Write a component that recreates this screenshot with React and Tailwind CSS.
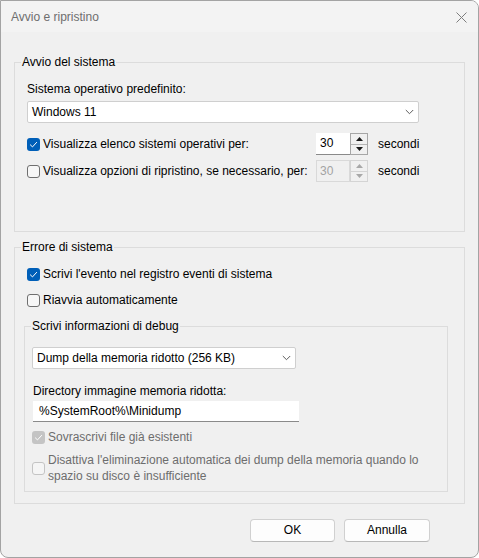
import React from 'react';

function CheckBox({ checked, disabled }) {
  let box = 'border border-[#6f6f6f] bg-[#f7f7f7]';
  if (checked && !disabled) box = 'bg-[#005fb8]';
  if (checked && disabled) box = 'bg-[#c4c4c4]';
  if (!checked && disabled) box = 'border border-[#c4c4c4] bg-[#f5f5f5]';
  return (
    <span className={`w-[13px] h-[13px] shrink-0 rounded-[3px] flex items-center justify-center ${box}`}>
      {checked && (
        <svg width="13" height="13" viewBox="0 0 13 13" fill="none">
          <path d="M3.4 6.9 L5.5 8.9 L9.6 4.4" stroke="#ffffff" strokeWidth="1" strokeLinecap="round" strokeLinejoin="round" />
        </svg>
      )}
    </span>
  );
}

function Chevron() {
  return (
    <svg width="9" height="6" viewBox="0 0 9 6" fill="none">
      <path d="M0.8 1 L4.5 4.7 L8.2 1" stroke="#5c5c5c" strokeWidth="1" />
    </svg>
  );
}

function Arrow({ up, disabled }) {
  const color = disabled ? '#a8a8a8' : '#1a1a1a';
  return (
    <svg width="7" height="4" viewBox="0 0 7 4">
      {up ? <path d="M0 4 L3.5 0 L7 4 Z" fill={color} /> : <path d="M0 0 L3.5 4 L7 0 Z" fill={color} />}
    </svg>
  );
}

function Spinner({ disabled }) {
  return (
    <div className="flex h-[22px]">
      {disabled ? (
        <div className="w-[34px] h-[22px] border border-[#d9d9d9] bg-[#f0f0f0] text-[#a3a3a3] pl-[3px] leading-[20px]">30</div>
      ) : (
        <div className="w-[34px] h-[22px] bg-white border-b border-[#8a8a8a] pl-[4px] leading-[21px] text-black">30</div>
      )}
      <div className={`w-[18px] h-[22px] flex flex-col border ${disabled ? 'border-[#d4d4d4]' : 'border-[#a6a6a6]'}`}>
        <div className={`flex-1 flex items-center justify-center border-b ${disabled ? 'bg-[#f0f0f0] border-[#d4d4d4]' : 'bg-[#f0f0f0] border-[#b4b4b4]'}`}>
          <Arrow up disabled={disabled} />
        </div>
        <div className={`flex-1 flex items-center justify-center ${disabled ? 'bg-[#f0f0f0]' : 'bg-[#f0f0f0]'}`}>
          <Arrow disabled={disabled} />
        </div>
      </div>
    </div>
  );
}

function Select({ value, width }) {
  return (
    <div className={`${width} h-[22px] bg-white border border-[#cfcfcf] rounded-[2px] flex items-center justify-between pl-[4px] pr-[4px]`}>
      <span className="text-black">{value}</span>
      <Chevron />
    </div>
  );
}

function App() {
  return (
    <div className="w-[479px] h-[558px] bg-[#f0f0f0] border border-[#a3a3a3] rounded-tr-[8px] rounded-b-[8px] overflow-hidden font-['Liberation_Sans',Arial,sans-serif] text-[12px] leading-[15px] text-black">
      <div className="h-[31px] bg-[#f3f3f3] flex items-center justify-between pl-[10px] pr-[11px]">
        <span className="text-[#6e6e6e] pt-[2px]">Avvio e ripristino</span>
        <svg width="11" height="11" viewBox="0 0 11 11" className="mt-[1px]">
          <path d="M0.5 0.5 L10.5 10.5 M10.5 0.5 L0.5 10.5" stroke="#7d7d7d" strokeWidth="1" />
        </svg>
      </div>

      <div className="px-[13px] pt-[23px]">
        <fieldset className="border border-[#dcdcdc]">
          <legend className="ml-[6px] px-[1px] leading-[15px]">Avvio del sistema</legend>
          <div className="pl-[12px] pt-[12px] pb-[49px]">
            <div>Sistema operativo predefinito:</div>
            <div className="mt-[4px]">
              <Select value="Windows 11" width="w-[392px]" />
            </div>
            <div className="mt-[10px] flex items-center">
              <div className="w-[289px] flex items-center gap-[3px]">
                <CheckBox checked />
                <span>Visualizza elenco sistemi operativi per:</span>
              </div>
              <Spinner />
              <span className="ml-[10px]">secondi</span>
            </div>
            <div className="mt-[5px] flex items-center">
              <div className="w-[289px] flex items-center gap-[3px]">
                <CheckBox />
                <span>Visualizza opzioni di ripristino, se necessario, per:</span>
              </div>
              <Spinner disabled />
              <span className="ml-[10px]">secondi</span>
            </div>
          </div>
        </fieldset>

        <fieldset className="mt-[8px] border border-[#dcdcdc]">
          <legend className="ml-[6px] px-[1px] leading-[15px]">Errore di sistema</legend>
          <div className="pl-[12px] pt-[12px] pb-[11px]">
            <div className="flex items-center gap-[3px] h-[15px]">
              <CheckBox checked />
              <span>Scrivi l'evento nel registro eventi di sistema</span>
            </div>
            <div className="mt-[11px] flex items-center gap-[3px] h-[15px]">
              <CheckBox />
              <span>Riavvia automaticamente</span>
            </div>

            <fieldset className="mt-[11px] -ml-[3px] w-[424px] border border-[#dcdcdc]">
              <legend className="ml-[6px] px-[1px] leading-[15px]">Scrivi informazioni di debug</legend>
              <div className="pl-[7px] pt-[13px] pb-[7px]">
                <Select value="Dump della memoria ridotto (256 KB)" width="w-[264px]" />
                <div className="mt-[15px] pl-[1px]">Directory immagine memoria ridotta:</div>
                <div className="mt-[2px] ml-[1px] w-[266px] h-[21px] bg-white border-b border-[#8a8a8a] pl-[6px] leading-[20px]">
                  %SystemRoot%\Minidump
                </div>
                <div className="mt-[8px] flex items-center gap-[3px] h-[15px]">
                  <CheckBox checked disabled />
                  <span className="text-[#6d6d6d]">Sovrascrivi file già esistenti</span>
                </div>
                <div className="mt-[7px] flex items-center gap-[3px]">
                  <CheckBox disabled />
                  <span className="text-[#6d6d6d] leading-[16px]">
                    Disattiva l'eliminazione automatica dei dump della memoria quando lo
                    <br />
                    spazio su disco è insufficiente
                  </span>
                </div>
              </div>
            </fieldset>
          </div>
        </fieldset>

        <div className="mt-[15px] flex justify-end gap-[9px] pr-[35px]">
          <button className="w-[85px] h-[23px] bg-[#fdfdfd] border border-[#d0d0d0] border-b-[#b8b8b8] rounded-[4px] text-black">OK</button>
          <button className="w-[86px] h-[23px] bg-[#fdfdfd] border border-[#d0d0d0] border-b-[#b8b8b8] rounded-[4px] text-black">Annulla</button>
        </div>
      </div>
    </div>
  );
}

export default App;
